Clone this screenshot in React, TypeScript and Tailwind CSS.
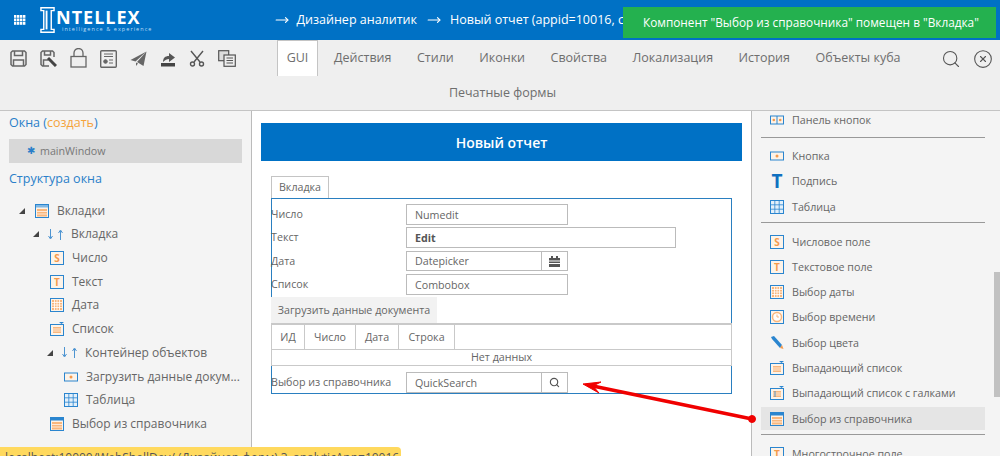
import React from "react";
import { MoveRight, Search, CircleX } from "lucide-react";

const blue = "#2a85cf";
const orange = "#f9b77d";

function Frame({ children }: { children?: React.ReactNode }) {
  return (
    <svg width="14" height="14" viewBox="0 0 14 14" className="shrink-0">
      <rect x="0.5" y="0.5" width="13" height="13" fill="#fdf3e8" stroke={blue} />
      {children}
    </svg>
  );
}

function ItemIcon({ kind }: { kind: string }) {
  if (kind === "num" || kind === "text") {
    return (
      <Frame>
        <text x="7" y="11" textAnchor="middle" fontSize="10" fontWeight="700" fill="#f59a4c" fontFamily="Open Sans">
          {kind === "num" ? "S" : "T"}
        </text>
      </Frame>
    );
  }
  if (kind === "date") {
    return (
      <Frame>
        <rect x="2" y="2" width="10" height="10" fill={orange} />
        <path d="M4.5 2v10M7 2v10M9.500 2v10M2 4.500h10M2 7h10M2 9.500h10" stroke="#fff" strokeWidth="0.8" />
      </Frame>
    );
  }
  if (kind === "time") {
    return (
      <Frame>
        <circle cx="7" cy="7" r="4.500" fill="#fff" stroke={orange} strokeWidth="1.500" />
        <path d="M7 4.500V7h2" stroke={orange} fill="none" />
      </Frame>
    );
  }
  if (kind === "color") {
    return (
      <svg width="14" height="14" viewBox="0 0 14 14" className="shrink-0">
        <path d="M1 1l3-1 8 9-2 3-8-9z" fill={blue} />
        <path d="M10 12l2-3 1.500 4z" fill="#f59a4c" />
      </svg>
    );
  }
  if (kind === "combo" || kind === "check") {
    return (
      <svg width="14" height="14" viewBox="0 0 14 14" className="shrink-0">
        <rect x="0.500" y="2.500" width="13" height="11" fill="#fdf3e8" stroke={blue} />
        <path d="M9 0h5l-2.500 2z" fill={blue} />
        <rect x="3" y="5" width="8" height="6" fill={orange} />
        <path d="M3 7h8M3 9h8" stroke="#fff" strokeWidth="0.700" />
        {kind === "check" && <path d="M5 5v6" stroke={blue} strokeWidth="0.800" />}
      </svg>
    );
  }
  if (kind === "quick" || kind === "tabs") {
    return (
      <svg width="14" height="14" viewBox="0 0 14 14" className="shrink-0">
        <rect x="0.500" y="0.500" width="13" height="13" fill="#fdf3e8" stroke={blue} />
        <rect x="1" y="1" width="12" height="2.500" fill={kind === "tabs" ? "#7fb7e4" : blue} />
        <rect x="2" y="5" width="10" height="7.500" fill={orange} />
        <path d="M2 7.500h10M2 10h10" stroke="#fff" strokeWidth="0.700" />
      </svg>
    );
  }
  if (kind === "button") {
    return (
      <svg width="14" height="14" viewBox="0 0 14 14" className="shrink-0">
        <rect x="0.500" y="3" width="13" height="8" fill="#fdf3e8" stroke={blue} />
        <circle cx="7" cy="7" r="1.500" fill="#f59a4c" />
      </svg>
    );
  }
  if (kind === "buttons") {
    return (
      <svg width="14" height="14" viewBox="0 0 14 14" className="shrink-0">
        <rect x="0.500" y="3" width="13" height="8" fill="#fdf3e8" stroke={blue} />
        <path d="M7 3v8" stroke={blue} />
        <circle cx="3.800" cy="7" r="1.300" fill="#f59a4c" />
        <circle cx="10.200" cy="7" r="1.300" fill="#f59a4c" />
      </svg>
    );
  }
  if (kind === "table") {
    return (
      <svg width="14" height="14" viewBox="0 0 14 14" className="shrink-0">
        <rect x="0.500" y="0.500" width="13" height="13" fill="#e3f0fa" stroke={blue} />
        <path d="M0 4.800h14M0 9.200h14M4.800 0v14M9.200 0v14" stroke={blue} strokeWidth="0.800" />
      </svg>
    );
  }
  if (kind === "label") {
    return <span className="w-[14px] shrink-0 text-center text-[19px] font-bold leading-none text-[#0f70c0]">T</span>;
  }
  return <Frame />;
}

function Triangle() {
  return (
    <svg width="8" height="8" viewBox="0 0 8 8" className="shrink-0">
      <path d="M7 1v6H1z" fill="#444" />
    </svg>
  );
}

function Arrows() {
  return (
    <span className="flex w-[16px] shrink-0 gap-[5px] text-[#4d94d1]">
      <svg width="5" height="11" viewBox="0 0 5 11">
        <path d="M2.500 0v9M0.500 7l2 3 2-3" stroke="currentColor" fill="none" />
      </svg>
      <svg width="5" height="11" viewBox="0 0 5 11">
        <path d="M2.500 11V2M0.500 4l2-3 2 3" stroke="currentColor" fill="none" />
      </svg>
    </span>
  );
}

const tree = [
  { label: "Вкладки", pad: 18, tri: true, icon: "tabs" },
  { label: "Вкладка", pad: 32, tri: true, arrows: true },
  { label: "Число", pad: 50, icon: "num" },
  { label: "Текст", pad: 50, icon: "text" },
  { label: "Дата", pad: 50, icon: "date" },
  { label: "Список", pad: 50, icon: "combo" },
  { label: "Контейнер объектов", pad: 46, tri: true, arrows: true },
  { label: "Загрузить данные докум...", pad: 64, icon: "button" },
  { label: "Таблица", pad: 64, icon: "table" },
  { label: "Выбор из справочника", pad: 50, icon: "quick" },
];

const palette = [
  { label: "Кнопка", icon: "button" },
  { label: "Подпись", icon: "label" },
  { label: "Таблица", icon: "table" },
  { sep: true },
  { label: "Числовое поле", icon: "num" },
  { label: "Текстовое поле", icon: "text" },
  { label: "Выбор даты", icon: "date" },
  { label: "Выбор времени", icon: "time" },
  { label: "Выбор цвета", icon: "color" },
  { label: "Выпадающий список", icon: "combo" },
  { label: "Выпадающий список с галками", icon: "check" },
  { label: "Выбор из справочника", icon: "quick", active: true },
  { sep: true },
  { label: "Многострочное поле", icon: "text" },
];

function ToolIcons() {
  const c = "#666";
  return (
    <div className="flex w-[277px] shrink-0 items-center gap-[13px] pl-[10px] pt-[1px]">
      <svg width="17" height="17" viewBox="0 0 17 17" fill="none" stroke={c} strokeWidth="1.500">
        <path d="M1 2.500 2.500 1h12L16 2.500v12l-1.500 1.500h-12L1 14.500z" />
        <path d="M4.500 1v4.500h8V1M3.500 16v-6h10v6" />
      </svg>
      <svg width="17" height="17" viewBox="0 0 17 17" fill="none" stroke={c} strokeWidth="1.500">
        <path d="M9 16H2.500L1 14.500v-12L2.500 1h10L14 2.500V7" />
        <path d="M4.500 1v4h6V1M3.500 16v-6h5" />
        <path d="M8 8l8 8" strokeWidth="3" stroke="#444" />
      </svg>
      <svg width="17" height="20" viewBox="0 0 17 20" fill="none" stroke={c} strokeWidth="1.300" className="-mt-[2px]">
        <rect x="1" y="8.500" width="15" height="10.500" />
        <path d="M4 8.500V5a4.500 4.500 0 0 1 9 0v3.500" />
      </svg>
      <svg width="17" height="18" viewBox="0 0 17 18" fill="none" stroke={c} strokeWidth="1">
        <rect x="0.700" y="0.700" width="15.600" height="16.600" rx="1" strokeWidth="1.400" />
        <path d="M4 4h9M4 6.500h9M9 10h4M9 13h4" />
        <circle cx="5.500" cy="11.500" r="1.800" fill={c} />
      </svg>
      <svg width="17" height="16" viewBox="0 0 17 16" fill={c}>
        <path d="M16.500 0.500 0.500 9l5 1.500zM16.500 0.500 7 11l6.500 4zM6 11.500V15l2-2.500z" />
      </svg>
      <svg width="16" height="17" viewBox="0 0 16 17" fill="#444">
        <rect x="1" y="13" width="14" height="3.500" />
        <path d="M3 12c0-4 2-6 6-6V3l6 4.500L9 12V9c-2 0-4 1-6 3z" fill="#555" />
      </svg>
      <svg width="16" height="17" viewBox="0 0 16 17" fill="none" stroke="#555" strokeWidth="1.400">
        <path d="M2 1l9 11M14 1 5 12" />
        <circle cx="3.500" cy="14" r="2" />
        <circle cx="12.500" cy="14" r="2" />
      </svg>
      <svg width="18" height="17" viewBox="0 0 18 17" fill="none" stroke="#555" strokeWidth="1.200">
        <rect x="0.700" y="0.700" width="10" height="10" fill="#ddd" />
        <rect x="6" y="5" width="11.300" height="11.300" fill="#eee" />
        <path d="M8.500 8h6.500M8.500 10.500h6.500M8.500 13h6.500" />
      </svg>
    </div>
  );
}

function AppsIcon() {
  const cells = [];
  for (let y = 0; y < 3; y++) {
    for (let x = 0; x < 4; x++) {
      cells.push(<rect key={`${x}-${y}`} x={x * 3} y={y * 3.500} width="2.400" height="2.800" />);
    }
  }
  return (
    <svg width="12" height="10" viewBox="0 0 12 10" fill="#fff" className="ml-[14px] shrink-0">
      {cells}
    </svg>
  );
}

function Field(props: { text: string; width: string; height?: string; bold?: boolean; addon?: React.ReactNode }) {
  return (
    <div className={`flex items-stretch border border-[#bbb] bg-white ${props.width} ${props.height ?? "h-[21px]"}`}>
      <span className={`flex flex-1 items-center pl-[8px] pt-[1px] ${props.bold ? "font-bold text-[#555]" : "text-[#666]"}`}>
        {props.text}
      </span>
      {props.addon && (
        <span className="flex w-[26px] items-center justify-center border-l border-[#bbb] text-[#555]">
          {props.addon}
        </span>
      )}
    </div>
  );
}

function FormRow(props: {
  label: string;
  text: string;
  width: string;
  height?: string;
  bold?: boolean;
  addon?: React.ReactNode;
  className?: string;
}) {
  return (
    <div className={`flex items-center ${props.className ?? ""}`}>
      <span className="-ml-[1px] w-[135px] shrink-0 text-[#666]">{props.label}</span>
      <Field text={props.text} width={props.width} height={props.height} bold={props.bold} addon={props.addon} />
    </div>
  );
}

export default function App() {
  return (
    <div className="relative flex h-[456px] w-[1000px] flex-col overflow-hidden bg-white text-[10.700px] text-[#666] [font-family:'Open_Sans',sans-serif]">
      <header className="flex h-[40px] shrink-0 items-center bg-[#0071c5] text-white">
        <AppsIcon />
        <div className="ml-[14px] flex items-center">
          <svg width="15" height="28" viewBox="0 0 16 28" fill="none" stroke="#fff" strokeWidth="1.500">
            <path d="M1 1h14v3h-3v20h3v3H1v-3h3V4H1z" />
            <path d="M7 4v20" strokeWidth="2" />
          </svg>
          <div className="ml-[1px] flex flex-col">
            <span className="text-[18px] font-bold leading-[17px] tracking-[1px]">NTELLEX</span>
            <span className="ml-[6px] text-[5.500px] leading-[6px] tracking-[1.050px] text-[#bcdcf5]">
              intelligence &amp; experience
            </span>
          </div>
        </div>
        <div className="ml-[122px] flex items-center text-[12.500px]">
          <MoveRight size={14} />
          <span className="ml-[8px]">Дизайнер аналитик</span>
          <MoveRight size={14} className="ml-[10px]" />
          <span className="ml-[9px] w-[180px] overflow-hidden whitespace-nowrap">Новый отчет (appid=10016, c</span>
        </div>
      </header>

      <div className="absolute left-[623px] top-[7px] flex h-[31px] w-[373px] items-center whitespace-nowrap bg-[#24b14f] pl-[20px] text-[11.800px] text-white">
        Компонент "Выбор из справочника" помещен в "Вкладка"
      </div>

      <div className="flex h-[71px] shrink-0 flex-col border-b border-[#c4c4c4] bg-[#efefef] text-[12.500px] text-[#6e6e6e]">
        <div className="flex h-[36px] items-stretch">
          <ToolIcons />
          <span className="flex w-[41px] items-center justify-center border-x border-t border-[#c4c4c4] bg-white">GUI</span>
          <nav className="ml-[16px] flex items-center gap-[25.500px]">
            <span>Действия</span>
            <span>Стили</span>
            <span>Иконки</span>
            <span>Свойства</span>
            <span>Локализация</span>
            <span>История</span>
            <span>Объекты куба</span>
          </nav>
          <div className="ml-auto mr-[7px] flex items-center gap-[12px] pt-[1px] text-[#555]">
            <Search size={20} strokeWidth={1.300} />
            <CircleX size={20} strokeWidth={1.300} />
          </div>
        </div>
        <div className="flex flex-1 items-center justify-center pl-[5px] pt-[1px]">Печатные формы</div>
      </div>

      <main className="flex min-h-0 flex-1">
        <aside className="w-[252px] shrink-0 border-r border-[#bbb] bg-[#f4f4f4] pt-[2px]">
          <div className="pl-[9px] pt-[1px] text-[12.500px] text-[#2a7fc9]">
            Окна (<span className="text-[#f5a33b]">создать</span>)
          </div>
          <div className="ml-[9px] mt-[6px] flex h-[24px] w-[233px] items-center bg-[#d8d8d8] pl-[18px] text-[#777]">
            <span className="mr-[5px] text-[10px] text-[#2a7fc9]">✱</span>
            mainWindow
          </div>
          <div className="mt-[7px] pl-[9px] text-[12.500px] text-[#2a7fc9]">Структура окна</div>
          <div className="mt-[10.400px] text-[12px]">
            {tree.map((row) => (
              <div key={row.label} className="flex h-[23.700px] items-center whitespace-nowrap" style={{ paddingLeft: row.pad }}>
                {row.tri && (
                  <span className={row.arrows ? "mr-[8px]" : "mr-[9px]"}>
                    <Triangle />
                  </span>
                )}
                {row.arrows && <Arrows />}
                {row.icon && <ItemIcon kind={row.icon} />}
                <span className={row.arrows ? "ml-[7px]" : "ml-[8px]"}>{row.label}</span>
              </div>
            ))}
          </div>
        </aside>

        <section className="w-[499px] shrink-0 px-[9px] pt-[12px]">
          <div className="flex h-[38px] w-[481px] items-center justify-center bg-[#0071c5] text-[14px] font-semibold text-white">
            Новый отчет
          </div>
          <div className="ml-[10px] mt-[15px] w-[461px]">
            <div className="flex h-[22px] w-[58px] items-center justify-center border-x border-t border-[#c4c4c4] text-[#666]">
              Вкладка
            </div>
            <div className="flex h-[125px] flex-col border-x border-t border-[#2a7fc0] pt-[5px]">
              <FormRow label="Число" text="Numedit" width="w-[162px]" />
              <FormRow label="Текст" text="Edit" width="w-[270px]" bold className="mt-[2px]" />
              <FormRow
                label="Дата"
                text="Datepicker"
                width="w-[162px]"
                height="h-[20px]"
                className="mt-[3px]"
                addon={
                  <svg width="11" height="11" viewBox="0 0 11 11" fill="#555">
                    <path d="M0 2h11v2.500H0zM0 5.500h11V7H0zM0 8h11v3H0zM2 0h2v2H2zM7 0h2v2H7z" />
                  </svg>
                }
              />
              <FormRow label="Список" text="Combobox" width="w-[162px]" className="mt-[3px]" />
              <button className="-ml-[1px] mt-[2px] flex h-[26px] w-[166px] items-center justify-center bg-[#f2f2f2] text-[#666]">
                Загрузить данные документа
              </button>
            </div>
            <div className="border-x border-t-2 border-[#c9c9c9]">
              <div className="flex h-[24px] text-[#666]">
                <span className="flex w-[33px] items-center justify-center border-r border-[#c9c9c9]">ИД</span>
                <span className="flex w-[51px] items-center justify-center border-r border-[#c9c9c9]">Число</span>
                <span className="flex w-[43px] items-center justify-center border-r border-[#c9c9c9]">Дата</span>
                <span className="flex w-[56px] items-center justify-center border-r border-[#c9c9c9]">Строка</span>
              </div>
              <div className="flex h-[17px] items-center justify-center border-y border-[#c9c9c9] leading-none text-[#666]">
                Нет данных
              </div>
            </div>
            <div className="border-x border-b border-[#2a7fc0] pt-[6px]">
              <FormRow
                label="Выбор из справочника"
                text="QuickSearch"
                width="w-[162px]"
                addon={<Search size={11} strokeWidth={2.500} />}
              />
            </div>
          </div>
        </section>

        <aside className="relative min-w-0 flex-1 border-l border-[#bbb] bg-[#f4f4f4] pl-[9px]">
          <div className="w-[224px]">
            <div className="flex h-[18px] items-center gap-[8px] pl-[9px]">
              <ItemIcon kind="buttons" />
              <span>Панель кнопок</span>
            </div>
            <div className="mb-[6.500px] mt-[8px] h-px bg-[#999]" />
            {palette.map((row, i) =>
              row.sep ? (
                <div key={i} className="mb-[7px] mt-[4px] h-px bg-[#999]" />
              ) : (
                <div
                  key={i}
                  className={`mb-[2.300px] flex h-[23px] items-center gap-[8px] whitespace-nowrap pl-[9px] ${row.active ? "bg-[#e5e5e5]" : ""}`}
                >
                  <ItemIcon kind={row.icon as string} />
                  <span>{row.label}</span>
                </div>
              ),
            )}
          </div>
          <div className="absolute right-0 top-[161px] h-[125px] w-[6px] bg-[#c1c1c1]" />
        </aside>
      </main>

      <div className="absolute bottom-0 left-0 h-[9px] w-[401px] overflow-hidden whitespace-nowrap rounded-tr-[4px] bg-[#ffd95e] pl-[5px] pt-[4px] text-[12px] leading-[14px] text-[#555]">
        localhost:10000/WebShellDev/ (Дизайнер форм) 3_analyticApp=10016
      </div>

      <svg className="absolute left-[580px] top-[375px]" width="180" height="50" viewBox="0 0 180 50" fill="#f00000" stroke="#f00000">
        <path d="M172 44 8 10" strokeWidth="3.500" />
        <path d="M3 9 21 7 13 11 19 18z" />
        <circle cx="172" cy="44" r="3.500" />
      </svg>
    </div>
  );
}
